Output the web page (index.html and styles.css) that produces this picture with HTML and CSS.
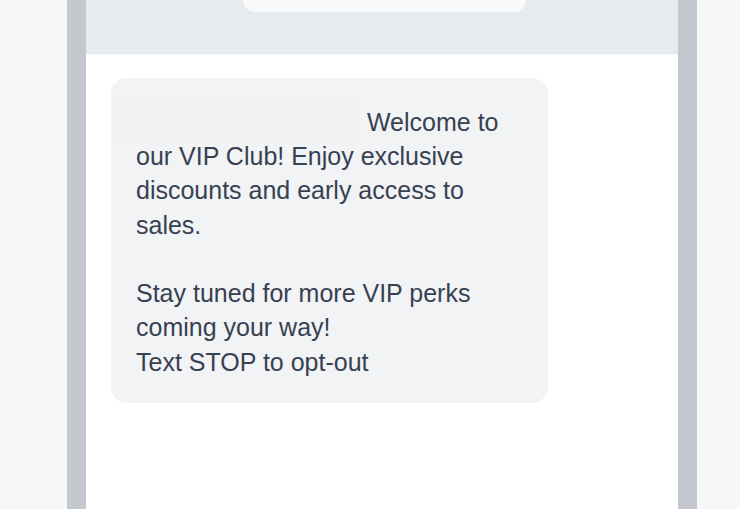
FILE: index.html
```html
<!DOCTYPE html>
<html>
  <head>
    <meta charset="utf-8" />
    <meta name="viewport" content="width=device-width, initial-scale=1" />
    <title>SMS preview</title>
    <link rel="stylesheet" href="styles.css">
  </head>
  <body>
    <div class="phone">
      <div class="phone-top">
        <div class="notch"></div>
      </div>

      <div class="screen">
        <div class="bubble">
          <p class="message"><span class="redact"></span> Welcome to our VIP Club! Enjoy exclusive discounts and early access to sales.</p>
          <p class="message gap">Stay tuned for more VIP perks coming your way!<br />Text STOP to opt-out</p>
        </div>
      </div>
    </div>
  </body>
</html>
```

FILE: styles.css
```css
body {
  margin: 0;
  padding: 0;
  font-family: "Liberation Sans", Arial, sans-serif;
  background: #f7f7f7;
  color: #374151;
}

.phone {
  width: 592px;
  height: 509px;
  margin-left: 67px;
  border-left: 19px solid #c3c8ce;
  border-right: 19px solid #c3c8ce;
  background: white;
  overflow: hidden;
}

.phone-top {
  height: 53px;
  background: #e8ebee;
  border-bottom: 1px solid #e3e6e9;
  display: flex;
  justify-content: center;
}

.notch {
  width: 283px;
  height: 12px;
  margin-left: 4px;
  background: #f7f9fb;
  border-radius: 0 0 14px 14px;
}

.screen {
  padding: 24px 25px;
}

.bubble {
  width: 387px;
  padding: 20px 25px 24px 25px;
  background: #f2f3f5;
  border-radius: 16px;
}

.message {
  margin: 0;
  font-size: 25px;
  line-height: 34.3px;
}

.message.gap {
  margin-top: 34.3px;
}

.redact {
  display: inline-block;
  width: 242px;
  height: 41px;
  margin-left: -18px;
  vertical-align: bottom;
  background: #f0f1f2;
}
```
